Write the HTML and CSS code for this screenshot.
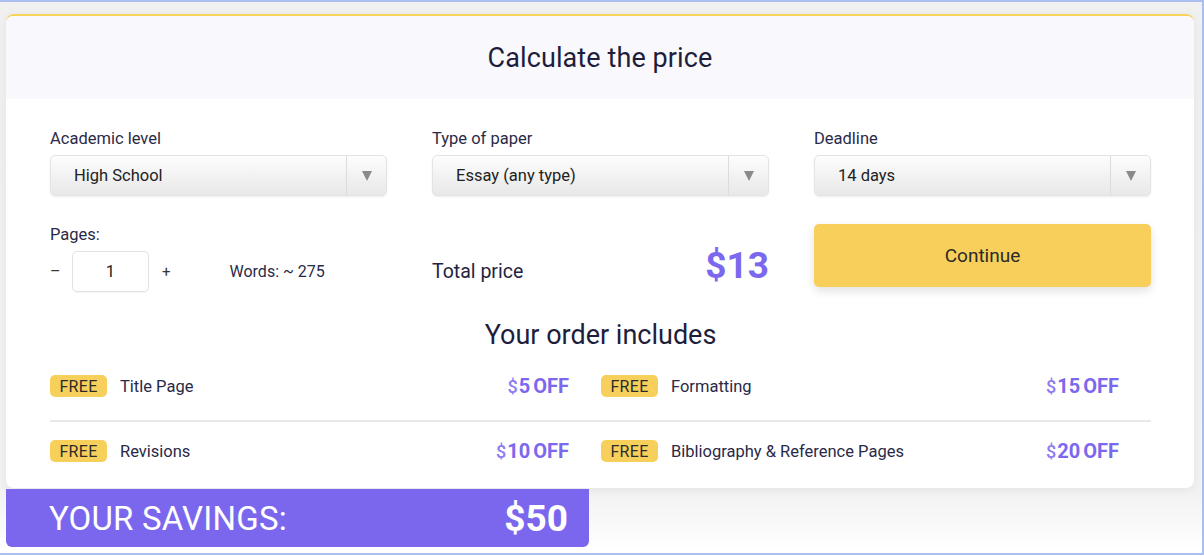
FILE: index.html
```html
<!DOCTYPE html>
<html>
<head>
<meta charset="utf-8">
<link rel="stylesheet" href="styles.css">
</head>
<body>
<div class="frame">
  <div class="card">
    <div class="card-head">Calculate the price</div>
    <div class="card-body">
      <div class="grid">
        <div class="field">
          <div class="label">Academic level</div>
          <div class="select"><span class="select-text">High School</span><span class="select-arrow"><i class="tri"></i></span></div>
        </div>
        <div class="field">
          <div class="label">Type of paper</div>
          <div class="select"><span class="select-text">Essay (any type)</span><span class="select-arrow"><i class="tri"></i></span></div>
        </div>
        <div class="field">
          <div class="label">Deadline</div>
          <div class="select"><span class="select-text">14 days</span><span class="select-arrow"><i class="tri"></i></span></div>
        </div>
        <div class="field">
          <div class="label">Pages:</div>
          <div class="stepper">
            <span class="minus">–</span>
            <span class="pages-input">1</span>
            <span class="plus">+</span>
            <span class="words">Words: ~ 275</span>
          </div>
        </div>
        <div class="total">
          <span class="total-label">Total price</span>
          <span class="total-price">$13</span>
        </div>
        <div class="btn-wrap">
          <div class="btn">Continue</div>
        </div>
      </div>
      <div class="includes-title">Your order includes</div>
      <div class="includes">
        <div class="item top"><span class="badge">FREE</span><span class="item-name">Title Page</span><span class="off"><span class="dollar">$</span>5 OFF</span></div>
        <div class="item top"><span class="badge">FREE</span><span class="item-name">Formatting</span><span class="off"><span class="dollar">$</span>15 OFF</span></div>
        <div class="item"><span class="badge">FREE</span><span class="item-name">Revisions</span><span class="off"><span class="dollar">$</span>10 OFF</span></div>
        <div class="item"><span class="badge">FREE</span><span class="item-name">Bibliography &amp; Reference Pages</span><span class="off"><span class="dollar">$</span>20 OFF</span></div>
      </div>
    </div>
  </div>
  <div class="savings">
    <span class="savings-label">YOUR SAVINGS:</span>
    <span class="savings-value">$50</span>
  </div>
</div>
</body>
</html>
```
FILE: styles.css
```css
* { box-sizing: border-box; }
html, body { margin: 0; padding: 0; background: #fff; }
body { font-family: Roboto, "Liberation Sans", sans-serif; color: #23233f; }

.frame {
  width: 1204px;
  height: 555px;
  border-top: 2px solid #a9c0ef;
  border-right: 2px solid #a9c0ef;
  border-bottom: 2px solid #a9c0ef;
  padding: 12px 0 0 6px;
  background: linear-gradient(to bottom, #f0f0f0 0, #f1f1f1 485px, #fbfbfb 530px, #fff 548px);
}

.card {
  width: 1188px;
  background: #fff;
  border-top: 2px solid #f8d35a;
  border-radius: 8px;
  box-shadow: 0 2px 10px rgba(0,0,0,0.06);
}

.card-head {
  height: 83px;
  background: #f9f9fd;
  border-radius: 7px 7px 0 0;
  display: flex;
  align-items: center;
  justify-content: center;
  font-size: 27px;
  color: #1e1e3c;
  letter-spacing: 0.1px;
}

.card-body {
  padding: 29px 43px 8px 44px;
}

.grid {
  display: grid;
  grid-template-columns: 337px 337px 337px;
  column-gap: 45px;
  row-gap: 28px;
}

.label {
  font-size: 16.5px;
  line-height: 20px;
  color: #2a2a48;
  margin-bottom: 6px;
  padding-top: 1px;
}

.select {
  height: 41px;
  border: 1px solid #e4e4e4;
  border-radius: 5px;
  background: linear-gradient(to bottom, #fdfdfd, #e8e8e8);
  box-shadow: 0 1px 2px rgba(0,0,0,0.08);
  display: flex;
  align-items: center;
}
.select-text {
  flex: 1;
  padding-left: 23px;
  font-size: 16.5px;
  color: #222;
}
.select-arrow {
  width: 40px;
  height: 100%;
  border-left: 1px solid #dcdcdc;
  display: flex;
  align-items: center;
  justify-content: center;
}
.tri {
  width: 0; height: 0;
  border-left: 5.5px solid transparent;
  border-right: 5.5px solid transparent;
  border-top: 10px solid #8a8a8a;
}

.stepper {
  display: flex;
  align-items: center;
  height: 41px;
}
.minus { width: 22px; font-size: 16px; color: #333; }
.pages-input {
  width: 77px;
  height: 41px;
  border: 1px solid #e2e2e2;
  border-radius: 5px;
  display: flex;
  align-items: center;
  justify-content: center;
  font-size: 16.5px;
  color: #222;
  box-shadow: 0 1px 1px rgba(0,0,0,0.04);
}
.plus { margin-left: 13px; font-size: 15px; color: #333; }
.words { margin-left: 59px; font-size: 16px; color: #2a2a48; }

.total {
  display: flex;
  justify-content: space-between;
  align-items: baseline;
  padding-top: 20px;
}
.total-label { font-size: 19.5px; color: #23233f; line-height: 44px; }
.total-price { font-size: 37px; font-weight: 700; color: #7b68ee; line-height: 44px; }

.btn {
  height: 63px;
  background: #f7cf5a;
  border-radius: 5px;
  box-shadow: 0 4px 10px rgba(0,0,0,0.12);
  display: flex;
  align-items: center;
  justify-content: center;
  font-size: 19px;
  color: #2a2a2a;
}

.includes-title {
  margin-top: 25px;
  text-align: center;
  font-size: 27px;
  line-height: 32px;
  color: #1e1e3c;
}

.includes {
  margin-top: 6px;
  display: grid;
  grid-template-columns: 551px 550px;
}
.item {
  height: 58px;
  display: flex;
  align-items: center;
  padding-right: 32px;
}
.item.top {
  height: 65px;
  border-bottom: 2px solid #e8e8e8;
  padding-bottom: 5px;
}
.badge {
  width: 57px;
  height: 22px;
  background: #f7d05b;
  border-radius: 5px;
  display: flex;
  align-items: center;
  justify-content: center;
  font-size: 16px;
  color: #2b2b2b;
  letter-spacing: 0.3px;
}
.item-name {
  margin-left: 13px;
  flex: 1;
  font-size: 16.5px;
  color: #2a2a48;
}
.off {
  font-size: 20px;
  font-weight: 700;
  color: #7b68ee;
  word-spacing: -2px;
}
.dollar {
  font-size: 18px;
  font-weight: 500;
  color: #8c7cf0;
  margin-right: 1px;
}

.savings {
  width: 583px;
  height: 58px;
  margin-top: 1px;
  background: #7b67ee;
  border-radius: 0 0 6px 6px;
  display: flex;
  align-items: center;
  justify-content: space-between;
  padding: 0 21px 0 43px;
  color: #fff;
}
.savings-label { font-size: 33px; font-weight: 400; letter-spacing: 0.2px; }
.savings-value { font-size: 37px; font-weight: 700; }
```
